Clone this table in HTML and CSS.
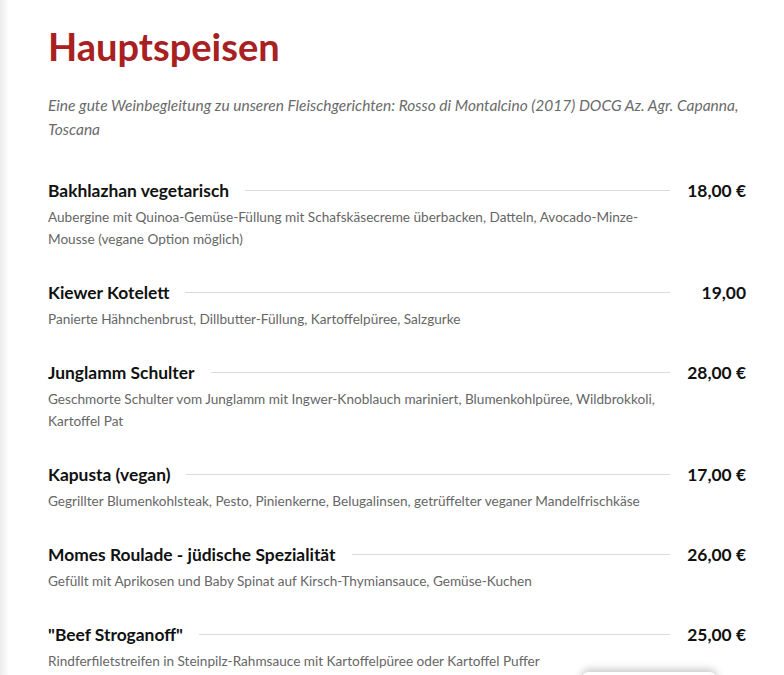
FILE: index.html
```html
<!DOCTYPE html>
<html lang="de">
<head>
    <meta charset="UTF-8">
    <meta name="viewport" content="width=device-width, initial-scale=1.0">
    <title>Hauptspeisen</title>
    <link rel="stylesheet" href="styles.css">
</head>
<body>
    <div class="menu">
        <h1>Hauptspeisen</h1>

        <p class="intro">Eine gute Weinbegleitung zu unseren Fleischgerichten: Rosso di Montalcino (2017) DOCG Az. Agr. Capanna, Toscana</p>

        <div class="dish">
            <div class="dish-head">
                <span class="dish-name">Bakhlazhan vegetarisch</span>
                <span class="dish-line"></span>
                <span class="dish-price">18,00 €</span>
            </div>
            <p class="dish-desc">Aubergine mit Quinoa-Gemüse-Füllung mit Schafskäsecreme überbacken, Datteln, Avocado-Minze-Mousse (vegane Option möglich)</p>
        </div>

        <div class="dish">
            <div class="dish-head">
                <span class="dish-name">Kiewer Kotelett</span>
                <span class="dish-line"></span>
                <span class="dish-price">19,00</span>
            </div>
            <p class="dish-desc">Panierte Hähnchenbrust, Dillbutter-Füllung, Kartoffelpüree, Salzgurke</p>
        </div>

        <div class="dish">
            <div class="dish-head">
                <span class="dish-name">Junglamm Schulter</span>
                <span class="dish-line"></span>
                <span class="dish-price">28,00 €</span>
            </div>
            <p class="dish-desc">Geschmorte Schulter vom Junglamm mit Ingwer-Knoblauch mariniert, Blumenkohlpüree, Wildbrokkoli, Kartoffel Pat</p>
        </div>

        <div class="dish">
            <div class="dish-head">
                <span class="dish-name">Kapusta (vegan)</span>
                <span class="dish-line"></span>
                <span class="dish-price">17,00 €</span>
            </div>
            <p class="dish-desc">Gegrillter Blumenkohlsteak, Pesto, Pinienkerne, Belugalinsen, getrüffelter veganer Mandelfrischkäse</p>
        </div>

        <div class="dish">
            <div class="dish-head">
                <span class="dish-name">Momes Roulade - jüdische Spezialität</span>
                <span class="dish-line"></span>
                <span class="dish-price">26,00 €</span>
            </div>
            <p class="dish-desc">Gefüllt mit Aprikosen und Baby Spinat auf Kirsch-Thymiansauce, Gemüse-Kuchen</p>
        </div>

        <div class="dish">
            <div class="dish-head">
                <span class="dish-name">"Beef Stroganoff"</span>
                <span class="dish-line"></span>
                <span class="dish-price">25,00 €</span>
            </div>
            <p class="dish-desc">Rindferfiletstreifen in Steinpilz-Rahmsauce mit Kartoffelpüree oder Kartoffel Puffer</p>
        </div>
    </div>

    <div class="floating-bar"></div>
</body>
</html>
```

FILE: styles.css
```css
body {
    margin: 0;
    font-family: Lato, "Open Sans", sans-serif;
    color: #111;
    background: linear-gradient(to right, #ececec, #fff 9px);
    min-height: 100vh;
}

.menu {
    padding: 22px 38px 0 48px;
}

h1 {
    margin: 0;
    font-size: 38px;
    line-height: 48px;
    font-weight: 700;
    color: #a8201f;
}

.intro {
    margin: 23px 0 37px;
    font-size: 15.5px;
    line-height: 24px;
    font-style: italic;
    color: #6b6b6b;
}

.dish {
    margin-bottom: 30px;
}

.dish-head {
    display: flex;
    align-items: center;
    gap: 16px;
    height: 24px;
}

.dish-name {
    font-size: 17.4px;
    font-weight: 700;
    white-space: nowrap;
}

.dish-line {
    flex: 1;
    height: 1px;
    background: #dcdcd6;
}

.dish-price {
    min-width: 60px;
    text-align: right;
    font-size: 17.4px;
    font-weight: 700;
    white-space: nowrap;
}

.dish-desc {
    margin: 4px 76px 0 0;
    font-size: 13.6px;
    line-height: 22px;
    color: #666;
}

.floating-bar {
    position: fixed;
    left: 582px;
    top: 672px;
    width: 134px;
    height: 40px;
    background: #fff;
    border-radius: 6px;
    box-shadow: 0 -2px 8px rgba(0, 0, 0, 0.25);
}
```
